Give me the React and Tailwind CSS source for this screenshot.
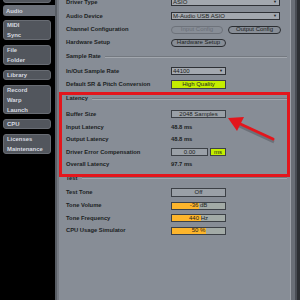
import React from "react";

function Tab({ lines, active, h }) {
  return (
    <div
      className={`${h} ml-[3px] pl-[3px] flex flex-col justify-center text-[5.9px] font-bold leading-[10px] text-[#d6dae0] ${
        active
          ? "w-[52px] bg-[#6c717a] rounded-l-[3px]"
          : "w-[48px] bg-[#52565d] border border-[#686c73] rounded-[3px]"
      }`}
    >
      {lines.map((l) => (
        <span key={l}>{l}</span>
      ))}
    </div>
  );
}

function Row({ h, label, children }) {
  return (
    <div className={`${h} flex items-center`}>
      <div className="w-[105px] text-[5.8px] font-bold text-[#1b1e22] whitespace-nowrap">{label}</div>
      <div className="flex items-center gap-[5px]">{children}</div>
    </div>
  );
}

function Header({ h, label }) {
  return (
    <div className={`${h} flex items-center pr-[3px]`}>
      <span className="text-[5.8px] font-bold text-[#1b1e22] whitespace-nowrap">{label}</span>
      <div className="flex-1 ml-[4px] flex flex-col">
        <div className="h-px bg-[#747980]" />
        <div className="h-px bg-[#a2a7ae]" />
      </div>
    </div>
  );
}

function Dropdown({ w, value }) {
  return (
    <div className={`${w} h-[8px] bg-[#a3a8af] border border-[#2e3136] flex items-center justify-between px-[1px] text-[6px] text-[#1b1e22]`}>
      <span>{value}</span>
      <span className="text-[4px] pr-[1px]">▼</span>
    </div>
  );
}

function Pill({ w, label, disabled }) {
  return (
    <div
      className={`${w} h-[8px] rounded-full flex items-center justify-center text-[6px] border ${
        disabled ? "border-[#6d727a] text-[#6a6f77]" : "border-[#2a2d31] text-[#1b1e22]"
      }`}
    >
      {label}
    </div>
  );
}

function Box({ w, h = "h-[8px]", label, green }) {
  return (
    <div
      className={`${w} ${h} flex items-center justify-center text-[6px] text-[#1b1e22] border border-[#3c4046] ${
        green ? "bg-[#c4ee00]" : "bg-[#9aa0a7]"
      }`}
    >
      {label}
    </div>
  );
}

function Slider({ fill, label }) {
  return (
    <div className="relative w-[55px] h-[8px] bg-[#a2aaa6] border border-[#3c4046] flex items-center justify-center text-[6px] text-[#1b1e22]">
      <div className="absolute left-0 top-0 bottom-0 bg-[#fdb52b]" style={{ width: fill }} />
      <span className="relative">{label}</span>
    </div>
  );
}

export default function App() {
  return (
    <div className="relative w-[300px] h-[300px] overflow-hidden bg-black flex font-['Liberation_Sans',Arial,sans-serif]">
      {/* sidebar */}
      <div className="w-[55px] flex flex-col">
        <div className="mt-[-8px]">
          <Tab h="h-[11px]" lines={[""]} />
        </div>
        <div className="mt-[2px]">
          <Tab h="h-[11px]" lines={["Audio"]} active />
        </div>
        <div className="mt-[4px] flex flex-col gap-[5px]">
          <Tab h="h-[20px]" lines={["MIDI", "Sync"]} />
          <Tab h="h-[20px]" lines={["File", "Folder"]} />
          <Tab h="h-[10px]" lines={["Library"]} />
          <Tab h="h-[29px]" lines={["Record", "Warp", "Launch"]} />
          <Tab h="h-[10px]" lines={["CPU"]} />
          <Tab h="h-[20px]" lines={["Licenses", "Maintenance"]} />
        </div>
      </div>
      <div className="w-[2px] bg-[#585d64]" />
      <div className="w-[2px] bg-[#747981]" />

      {/* main panel */}
      <div className="flex-1 bg-[#878d96] pl-[7px] flex flex-col">
        <div className="mt-[-5px] flex flex-col">
          <Row h="h-[14px]" label="Driver Type">
            <Dropdown w="w-[109px]" value="ASIO" />
          </Row>
          <Row h="h-[14px]" label="Audio Device">
            <Dropdown w="w-[109px]" value="M-Audio USB ASIO" />
          </Row>
          <Row h="h-[13px]" label="Channel Configuration">
            <Pill w="w-[52px]" label="Input Config" disabled />
            <Pill w="w-[53px]" label="Output Config" />
          </Row>
          <Row h="h-[13px]" label="Hardware Setup">
            <Pill w="w-[55px]" label="Hardware Setup" />
          </Row>
          <Header h="h-[15px]" label="Sample Rate" />
          <Row h="h-[14px]" label="In/Out Sample Rate">
            <Dropdown w="w-[55px]" value="44100" />
          </Row>
          <Row h="h-[12px]" label="Default SR & Pitch Conversion">
            <Box w="w-[55px]" h="h-[9px]" label="High Quality" green />
          </Row>
          <Header h="h-[17px]" label="Latency" />
          <Row h="h-[14px]" label="Buffer Size">
            <Box w="w-[55px]" label="2048 Samples" />
          </Row>
          <Row h="h-[12px]" label="Input Latency">
            <span className="text-[5.8px] font-bold text-[#1b1e22]">48.8 ms</span>
          </Row>
          <Row h="h-[13px]" label="Output Latency">
            <span className="text-[5.8px] font-bold text-[#1b1e22]">48.8 ms</span>
          </Row>
          <Row h="h-[12px]" label="Driver Error Compensation">
            <div className="flex gap-[2px]">
              <Box w="w-[37px]" label="0.00" />
              <Box w="w-[16px]" label="ms" green />
            </div>
          </Row>
          <Row h="h-[13px]" label="Overall Latency">
            <span className="text-[5.8px] font-bold text-[#1b1e22]">97.7 ms</span>
          </Row>
          <Header h="h-[14px]" label="Test" />
          <Row h="h-[14px]" label="Test Tone">
            <Box w="w-[55px]" h="h-[9px]" label="Off" />
          </Row>
          <Row h="h-[13px]" label="Tone Volume">
            <Slider fill="27px" label="-36 dB" />
          </Row>
          <Row h="h-[12px]" label="Tone Frequency">
            <Slider fill="29px" label="440 Hz" />
          </Row>
          <Row h="h-[13px]" label="CPU Usage Simulator">
            <Slider fill="34px" label="50 %" />
          </Row>
        </div>
      </div>

      {/* scroll strip */}
      <div className="w-px bg-[#9ea3aa]" />
      <div className="w-[4px] bg-[#6a6f77]" />
      <div className="w-[2px] bg-[#4a4e55]" />
      <div className="w-[3px] bg-[#2c2f33]" />

      {/* annotation */}
      <div className="absolute left-[59px] top-[92px] w-[231px] h-[85px] border-[3px] border-[#e3161c]" />
      <svg className="absolute left-0 top-0" width="300" height="300" viewBox="0 0 300 300">
        <line x1="273" y1="140" x2="236" y2="123" stroke="#3a3d42" strokeOpacity="0.35" strokeWidth="3" transform="translate(1 2)" />
        <line x1="273" y1="139" x2="236" y2="122" stroke="#e3161c" strokeWidth="3" strokeLinecap="round" />
        <polygon points="228,118 244,117 237,131" fill="#e3161c" />
      </svg>
    </div>
  );
}
